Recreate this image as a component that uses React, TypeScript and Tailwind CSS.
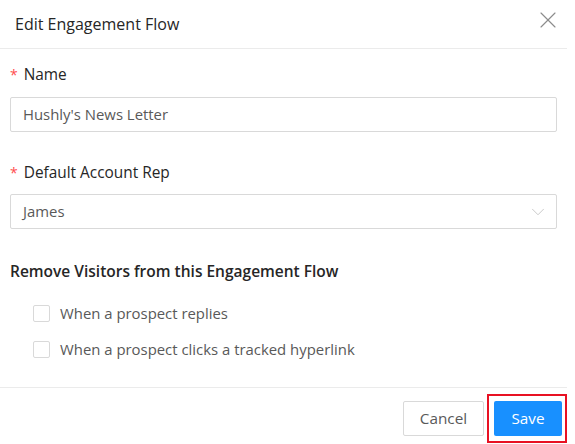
import { X, ChevronDown } from 'lucide-react'

function Label({ children }: { children: React.ReactNode }) {
  return (
    <div className="flex items-center text-[15.4px] leading-[22px] text-[#262626]">
      <span className="mr-[6px] text-[14px] text-[#ff4d4f]">*</span>
      {children}
    </div>
  )
}

function Check({ label }: { label: string }) {
  return (
    <label className="flex items-center gap-[10px] text-[14.9px] leading-[22px] text-[#595959]">
      <span className="h-[17px] w-[17px] rounded-[2px] border border-[#d9d9d9] bg-white" />
      {label}
    </label>
  )
}

export default function App() {
  return (
    <div className="h-[444px] w-[575px] bg-white" style={{ fontFamily: '"Open Sans", "Noto Sans", sans-serif' }}>
      <div className="w-[567px]">
        <div className="flex h-[49px] items-center justify-between border-b border-[#ebebeb] pl-[15px] pr-[5px] pb-[1px]">
          <span className="text-[16px] text-[#262626]">Edit Engagement Flow</span>
          <X size={28} strokeWidth={1} className="mb-[8px] text-[#8c8c8c]" />
        </div>

        <div className="px-[10px] pt-[15px]">
          <Label>Name</Label>
          <div className="mt-[11px] flex h-[35px] items-center rounded-[2px] border border-[#d9d9d9] px-[12px] text-[14.9px] text-[#595959]">
            Hushly's News Letter
          </div>

          <div className="mt-[30px]">
            <Label>Default Account Rep</Label>
          </div>
          <div className="mt-[10px] flex h-[35px] items-center justify-between rounded-[2px] border border-[#d9d9d9] pl-[12px] pr-[7px] text-[14.9px] text-[#595959]">
            James
            <ChevronDown size={22} strokeWidth={0.9} className="text-[#bfbfbf]" />
          </div>

          <div className="mt-[31px] text-[15.5px] font-semibold leading-[22px] text-[#262626]">
            Remove Visitors from this Engagement Flow
          </div>
          <div className="mt-[20px] flex flex-col gap-[14px] pl-[23px]">
            <Check label="When a prospect replies" />
            <Check label="When a prospect clicks a tracked hyperlink" />
          </div>
        </div>

        <div className="mt-[27px] flex items-center justify-end gap-[10px] border-t border-[#ebebeb] pt-[13px]">
          <button className="h-[35px] w-[81px] rounded-[2px] border border-[#d9d9d9] bg-white text-[15.3px] text-[#595959]">
            Cancel
          </button>
          <div className="-my-[8px] -ml-[7px] border-[2px] border-[#e81123] py-[5px] pl-[5px] pr-[3px]">
            <button className="h-[35px] w-[68px] rounded-[2px] bg-[#1890ff] text-[15.3px] text-white">Save</button>
          </div>
        </div>
      </div>
    </div>
  )
}
